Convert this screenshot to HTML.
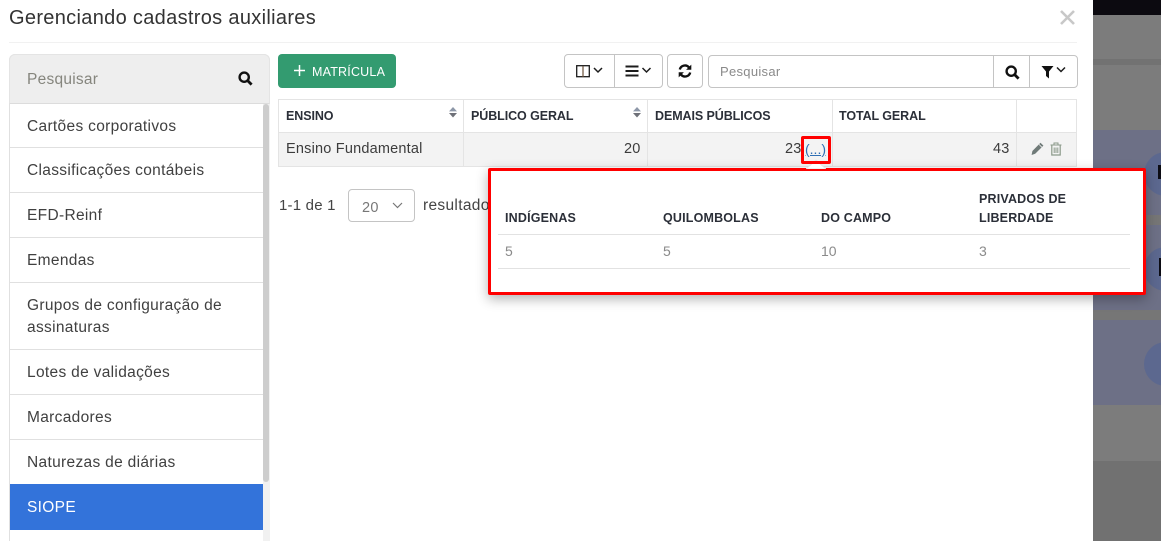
<!DOCTYPE html>
<html><head><meta charset="utf-8">
<style>
*{box-sizing:border-box}
html,body{margin:0;padding:0;width:1161px;height:541px;overflow:hidden;background:#fff}
body{position:relative;font-family:"Liberation Sans",sans-serif;color:#3c3c3c}
.a{position:absolute}
.t{position:absolute;white-space:nowrap;line-height:20px}
.li{font-size:15.5px;letter-spacing:.32px;left:27px;color:#404040}
.ln{position:absolute;left:10px;width:253px;height:1px;background:#e0e0e0}
.th{font-size:12.5px;font-weight:bold;color:#2b2f38;letter-spacing:-.08px;top:106px}
.td{font-size:14.5px;letter-spacing:.2px;top:139px;color:#3c3c3c}
.pth{font-size:12.5px;font-weight:bold;color:#2b2f38;letter-spacing:.18px;line-height:19px}
.ptd{font-size:14px;color:#8a8a8a;top:241px}
.bd{position:absolute;border:1px solid #c4c4c4;background:#fff}
svg{position:absolute;display:block}
</style></head><body>
<!-- backdrop -->
<div class="a" style="left:1093px;top:0;width:68px;height:541px;background:#7c7c7c"></div>
<div class="a" style="left:1093px;top:0;width:68px;height:15px;background:#0c0a10"></div>
<div class="a" style="left:1093px;top:59px;width:68px;height:6px;background:#727272"></div>
<div class="a" style="left:1093px;top:130px;width:68px;height:275px;background:#6d7086"></div>
<div class="a" style="left:1093px;top:215px;width:68px;height:10px;background:#767676"></div>
<div class="a" style="left:1093px;top:310px;width:68px;height:10px;background:#767676"></div>
<div class="a" style="left:1093px;top:461px;width:68px;height:80px;background:#717171"></div>
<div class="a" style="left:1144px;top:152px;width:44px;height:44px;border-radius:50%;background:#5c688f"></div>
<div class="a" style="left:1144px;top:247px;width:44px;height:44px;border-radius:50%;background:#5c688f"></div>
<div class="a" style="left:1144px;top:342px;width:44px;height:44px;border-radius:50%;background:#5c688f"></div>
<div class="a" style="left:1158px;top:165px;width:3px;height:14px;background:#0c0c14"></div>
<div class="a" style="left:1159px;top:258px;width:2px;height:18px;background:#0c0c14"></div>
<!-- modal -->
<div class="a" style="left:0;top:0;width:1093px;height:541px;background:#fff"></div>
<div class="t" style="left:9px;top:6px;font-size:20px;line-height:24px;letter-spacing:.32px;color:#333">Gerenciando cadastros auxiliares</div>
<svg style="left:1059px;top:9px" width="17" height="17" viewBox="0 0 17 17"><path d="M2 2L15 15M15 2L2 15" stroke="#c8c8c8" stroke-width="2.6"/></svg>
<div class="a" style="left:9px;top:42px;width:1068px;height:1px;background:#f1f1f1"></div>
<!-- left panel -->
<div class="a" style="left:9px;top:54px;width:261px;height:500px;border:1px solid #e0e0e0;border-radius:6px;background:#fff"></div>
<div class="a" style="left:9px;top:54px;width:261px;height:50px;background:#eee;border:1px solid #e4e4e4;border-bottom:1px solid #dcdcdc;border-radius:6px 6px 0 0"></div>
<div class="t" style="left:27px;top:70px;font-size:15.5px;letter-spacing:.25px;color:#85857d">Pesquisar</div>
<svg style="left:238px;top:71px" width="15" height="15" viewBox="0 0 15 15"><circle cx="6.2" cy="6.2" r="4.6" fill="none" stroke="#111" stroke-width="2.4"/><path d="M9.6 9.6L13.6 13.6" stroke="#111" stroke-width="2.8"/></svg>
<div class="a" style="left:263px;top:104px;width:7px;height:437px;background:#f1f1f1"></div>
<div class="a" style="left:263px;top:104px;width:6px;height:378px;background:#cdcdcd;border-radius:3px"></div>
<div class="t li" style="top:117px">Cartões corporativos</div><div class="ln" style="top:147px"></div>
<div class="t li" style="top:161px">Classificações contábeis</div><div class="ln" style="top:192px"></div>
<div class="t li" style="top:206px">EFD-Reinf</div><div class="ln" style="top:237px"></div>
<div class="t li" style="top:251px">Emendas</div><div class="ln" style="top:282px"></div>
<div class="t li" style="top:296px">Grupos de configuração de</div>
<div class="t li" style="top:318px">assinaturas</div><div class="ln" style="top:349px"></div>
<div class="t li" style="top:363px">Lotes de validações</div><div class="ln" style="top:394px"></div>
<div class="t li" style="top:408px">Marcadores</div><div class="ln" style="top:439px"></div>
<div class="t li" style="top:453px">Naturezas de diárias</div>
<div class="a" style="left:10px;top:484px;width:253px;height:46px;background:#3373da"></div>
<div class="t li" style="top:498px;color:#fff">SIOPE</div>
<!-- add button -->
<div class="a" style="left:278px;top:54px;width:118px;height:34px;background:#339b70;border-radius:4px"></div>
<svg style="left:294px;top:65px" width="11" height="11" viewBox="0 0 11 11"><path d="M5.5 0V11M0 5.5H11" stroke="#fff" stroke-width="1.5"/></svg>
<div class="t" style="left:312px;top:62px;font-size:12.5px;letter-spacing:.2px;color:#fff">MATRÍCULA</div>
<!-- toolbar -->
<div class="bd" style="left:564px;top:54px;width:99px;height:34px;border-radius:4px"></div>
<div class="a" style="left:614px;top:55px;width:1px;height:32px;background:#c4c4c4"></div>
<svg style="left:576px;top:65px" width="28" height="13" viewBox="0 0 28 13"><rect x=".7" y=".7" width="12.6" height="11" fill="none" stroke="#1c1c1c" stroke-width="1.3"/><path d="M7 1V12" stroke="#6a5038" stroke-width="1.2"/><path d="M18 3L22 7L26 3" fill="none" stroke="#1c1c1c" stroke-width="1.5"/></svg>
<svg style="left:625px;top:65px" width="28" height="13" viewBox="0 0 28 13"><path d="M.5 1.5H13.5M.5 6H13.5M.5 10.5H13.5" stroke="#1c1c1c" stroke-width="2"/><path d="M17.5 3L21.5 7L25.5 3" fill="none" stroke="#1c1c1c" stroke-width="1.5"/></svg>
<div class="bd" style="left:667px;top:54px;width:36px;height:34px;border-radius:4px"></div>
<svg style="left:678px;top:64px" width="14" height="14" viewBox="0 0 14 14"><path d="M1.8 5.5A5.3 5.3 0 0 1 11 3.4" fill="none" stroke="#111" stroke-width="2.4"/><path d="M13.3 .6V5.8H8.1Z" fill="#111"/><path d="M12.2 8.5A5.3 5.3 0 0 1 3 10.6" fill="none" stroke="#111" stroke-width="2.4"/><path d="M.7 13.4V8.2H5.9Z" fill="#111"/></svg>
<div class="bd" style="left:708px;top:55px;width:370px;height:33px;border-radius:4px"></div>
<div class="a" style="left:993px;top:56px;width:1px;height:31px;background:#c4c4c4"></div>
<div class="a" style="left:1029px;top:56px;width:1px;height:31px;background:#c4c4c4"></div>
<div class="t" style="left:720px;top:62px;font-size:13px;letter-spacing:.3px;color:#8a8a8a">Pesquisar</div>
<svg style="left:1005px;top:65px" width="15" height="15" viewBox="0 0 15 15"><circle cx="6.2" cy="6.2" r="4.6" fill="none" stroke="#111" stroke-width="2.4"/><path d="M9.6 9.6L13.6 13.6" stroke="#111" stroke-width="2.8"/></svg>
<svg style="left:1041px;top:65px" width="27" height="14" viewBox="0 0 27 14"><path d="M.5 1H12.5L8 6.5V13.5L5 11V6.5Z" fill="#111"/><path d="M16 2.5L20 6.5L24 2.5" fill="none" stroke="#1c1c1c" stroke-width="1.5"/></svg>
<!-- table -->
<div class="a" style="left:278px;top:99px;width:799px;height:68px;border:1px solid #e4e4e4;background:#fff"></div>
<div class="a" style="left:279px;top:133px;width:797px;height:33px;background:#f3f3f3"></div>
<div class="a" style="left:279px;top:132px;width:797px;height:1px;background:#e4e4e4"></div>
<div class="a" style="left:463px;top:100px;width:1px;height:66px;background:#e4e4e4"></div>
<div class="a" style="left:647px;top:100px;width:1px;height:66px;background:#e4e4e4"></div>
<div class="a" style="left:832px;top:100px;width:1px;height:66px;background:#e4e4e4"></div>
<div class="a" style="left:1016px;top:100px;width:1px;height:66px;background:#e4e4e4"></div>
<div class="t th" style="left:286px">ENSINO</div>
<div class="t th" style="left:471px">PÚBLICO GERAL</div>
<div class="t th" style="left:655px">DEMAIS PÚBLICOS</div>
<div class="t th" style="left:839px">TOTAL GERAL</div>
<svg style="left:449px;top:107px" width="8" height="11" viewBox="0 0 8 11"><path d="M4 0L8 4.4H0Z" fill="#8d97a8"/><path d="M4 10.5L8 6H0Z" fill="#6e7078"/></svg>
<svg style="left:633px;top:107px" width="8" height="11" viewBox="0 0 8 11"><path d="M4 0L8 4.4H0Z" fill="#8d97a8"/><path d="M4 10.5L8 6H0Z" fill="#6e7078"/></svg>
<div class="t td" style="left:286px">Ensino Fundamental</div>
<div class="t td" style="left:624px">20</div>
<div class="t td" style="left:785px">23</div>
<div class="t" style="left:805px;top:139px;font-size:14px;color:#2f6fb4;text-decoration:underline">(...)</div>
<div class="t td" style="left:993px">43</div>
<svg style="left:1031px;top:142px" width="13" height="14" viewBox="0 0 13 14"><path d="M9.5 .8L12.4 3.6L4.2 11.8L.6 13L1.4 9Z" fill="#6f7a78"/><path d="M8 2.4L10.8 5.2" stroke="#f3f3f3" stroke-width=".8"/></svg>
<svg style="left:1050px;top:142px" width="12" height="14" viewBox="0 0 12 14"><path d="M.5 3H11.5M4 3V1H8V3" fill="none" stroke="#8b9a8a" stroke-width="1"/><path d="M1.8 3.5V13H10.2V3.5" fill="none" stroke="#8b9a8a" stroke-width="1.2"/><path d="M4.2 5.5V11M6 5.5V11M7.8 5.5V11" stroke="#8b9a8a" stroke-width="1"/></svg>
<!-- footer -->
<div class="t" style="left:279px;top:196px;font-size:15px;letter-spacing:.2px;color:#444">1-1 de 1</div>
<div class="bd" style="left:348px;top:189px;width:67px;height:33px;border-radius:4px"></div>
<div class="t" style="left:362px;top:198px;font-size:14.5px;letter-spacing:.3px;color:#777">20</div>
<svg style="left:392px;top:202px" width="11" height="7" viewBox="0 0 11 7"><path d="M1 1L5.5 5.5L10 1" fill="none" stroke="#777" stroke-width="1.2"/></svg>
<div class="t" style="left:423px;top:196px;font-size:15.5px;letter-spacing:.32px;color:#444">resultados</div>
<!-- popover -->
<div class="a" style="left:488px;top:168px;width:658px;height:127px;background:#fff;border:3px solid #f00;border-radius:2px;box-shadow:0 4px 12px rgba(0,0,0,.3)"></div>
<svg style="left:806px;top:157px" width="20" height="12" viewBox="0 0 20 12"><path d="M0 12L10 3L20 12Z" fill="#fff" stroke="#e4e4e4"/></svg>
<div class="a" style="left:801px;top:136px;width:30px;height:28px;border:3px solid #f00;border-radius:2px"></div>
<div class="t pth" style="left:505px;top:209px">INDÍGENAS</div>
<div class="t pth" style="left:663px;top:209px">QUILOMBOLAS</div>
<div class="t pth" style="left:821px;top:209px">DO CAMPO</div>
<div class="t pth" style="left:979px;top:190px">PRIVADOS DE</div>
<div class="t pth" style="left:979px;top:209px">LIBERDADE</div>
<div class="a" style="left:498px;top:234px;width:632px;height:1px;background:#e2e2e2"></div>
<div class="a" style="left:498px;top:268px;width:632px;height:1px;background:#e2e2e2"></div>
<div class="t ptd" style="left:505px">5</div>
<div class="t ptd" style="left:663px">5</div>
<div class="t ptd" style="left:821px">10</div>
<div class="t ptd" style="left:979px">3</div>
</body></html>
